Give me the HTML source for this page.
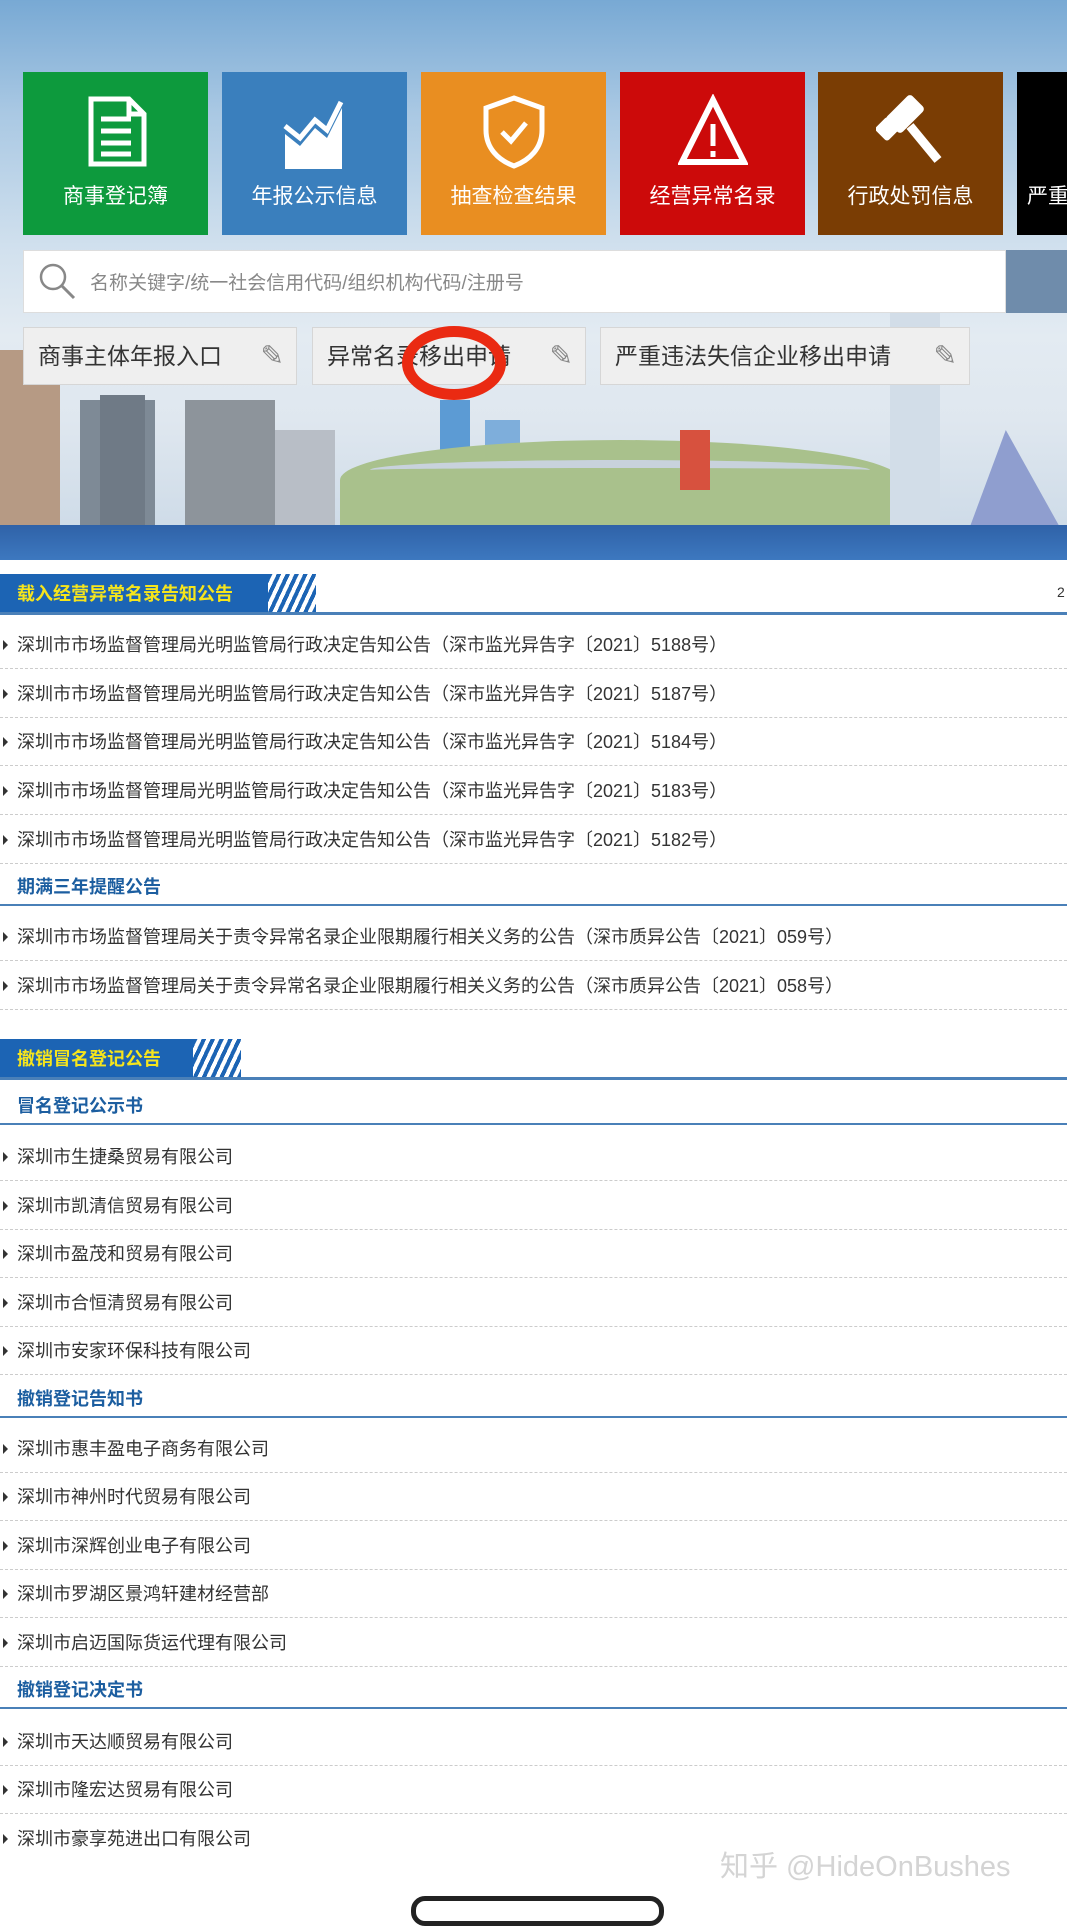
<!DOCTYPE html>
<html><head><meta charset="utf-8"><style>
*{margin:0;padding:0;box-sizing:border-box}
body{width:1067px;height:1906px;overflow:hidden;background:#fff;font-family:"Liberation Sans","Noto Sans CJK SC",sans-serif;position:relative}
.a{position:absolute}
.hero{left:0;top:0;width:1067px;height:560px;background:linear-gradient(180deg,#78a9d4 0%,#a9c8e3 20%,#d2e1ee 45%,#e3ebf2 60%,#dfe7ef 75%,#c9d8e6 100%);overflow:hidden}
.tile{top:72px;width:185px;height:163px;color:#fff;font-size:21px;text-align:center}
.tile span{position:absolute;left:0;right:0;top:108px}
.tile svg{position:absolute;left:58px;top:22px}
.btn{top:327px;height:58px;background:#efefef;border:1px solid #d6d6d6;font-size:23px;color:#333;line-height:56px;padding-left:14px}
.btn i{position:absolute;right:12px;top:10px;font-style:normal;color:#888;font-size:28px;line-height:36px}
.row{left:0;width:1067px;height:48px;font-size:18px;color:#333;line-height:48px;padding-left:17px;border-bottom:1px dashed #ccc}
.row:before{content:"";position:absolute;left:3px;top:19px;border-left:5px solid #333;border-top:5px solid transparent;border-bottom:5px solid transparent}
.sub{left:0;width:1067px;font-size:18px;font-weight:bold;color:#1c5ea0;padding-left:17px;border-bottom:2px solid #4a80b8;height:34px;line-height:30px}
.hd{left:0;height:40px;background:#1c64b4;color:#f6e51c;font-weight:bold;font-size:18px;line-height:40px;padding-left:17px}
.hdline{left:0;width:1067px;height:3px;background:#4a80b8}
</style></head><body>
<div class="a hero">
 <div class="a" style="left:0;top:350px;width:60px;height:190px;background:#b69a84"></div>
 <div class="a" style="left:80px;top:400px;width:75px;height:140px;background:#7e8a96"></div>
 <div class="a" style="left:100px;top:395px;width:45px;height:145px;background:#6f7a86"></div>
 <div class="a" style="left:185px;top:400px;width:90px;height:140px;background:#8d949b"></div>
 <div class="a" style="left:275px;top:430px;width:60px;height:110px;background:#b8bec6"></div>
 <div class="a" style="left:440px;top:400px;width:30px;height:100px;background:#5c9bd4"></div>
 <div class="a" style="left:485px;top:420px;width:35px;height:80px;background:#7eaedb"></div>
 <div class="a" style="left:340px;top:440px;width:560px;height:100px;background:#a9c18c;border-radius:50% 50% 0 0/40% 40% 0 0"></div>
 <div class="a" style="left:370px;top:460px;width:500px;height:20px;border-top:8px solid #c8d2dc;border-radius:50%"></div>
 <div class="a" style="left:680px;top:430px;width:30px;height:60px;background:#d7513e"></div>
 <div class="a" style="left:890px;top:300px;width:50px;height:240px;background:#d2dde8"></div>
 <div class="a" style="left:965px;top:430px;width:102px;height:110px;background:#8f9ecf;clip-path:polygon(40% 0,100% 100%,0 100%)"></div>
 <div class="a" style="left:0;top:525px;width:1067px;height:35px;background:linear-gradient(180deg,#2f62a8,#3d78bf)"></div>
 <div class="a tile" style="left:23px;background:#0d9a3d"><svg width="70" height="75" viewBox="0 0 70 75"><path d="M10 5h38l15 15v50H10z M48 5v15h15" fill="none" stroke="#fff" stroke-width="5"/><path d="M20 25h30M20 37h30M20 49h30M20 60h30" stroke="#fff" stroke-width="5"/></svg><span>商事登记簿</span></div>
 <div class="a tile" style="left:222px;background:#3a7fbd"><svg width="70" height="75" viewBox="0 0 70 75"><path d="M5 60V40l15 12 15-18 12 10 15-30v66H5z" fill="#fff"/><path d="M5 32l15 12 15-18 12 10 14-28" fill="none" stroke="#fff" stroke-width="5"/></svg><span>年报公示信息</span></div>
 <div class="a tile" style="left:421px;background:#e98e21"><svg width="70" height="75" viewBox="0 0 70 75"><path d="M35 4l28 10v22c0 18-12 30-28 36C19 66 7 54 7 36V14z" fill="none" stroke="#fff" stroke-width="5"/><path d="M23 38l9 9 15-18" fill="none" stroke="#fff" stroke-width="5"/></svg><span>抽查检查结果</span></div>
 <div class="a tile" style="left:620px;background:#cc0a0a"><svg width="70" height="75" viewBox="0 0 70 75"><path d="M35 6L66 68H4z" fill="none" stroke="#fff" stroke-width="6"/><path d="M35 30v22M35 57v6" stroke="#fff" stroke-width="5"/></svg><span>经营异常名录</span></div>
 <div class="a tile" style="left:818px;background:#7a3d04"><svg width="70" height="75" viewBox="0 0 70 75"><rect x="18" y="2" width="22" height="36" rx="4" transform="rotate(45 29 20)" fill="#fff"/><path d="M34 32l28 34" stroke="#fff" stroke-width="9"/><rect x="2" y="26" width="18" height="18" rx="3" transform="rotate(45 11 35)" fill="#fff"/></svg><span>行政处罚信息</span></div>
 <div class="a tile" style="left:1017px;width:60px;background:#000"><span style="text-align:left;padding-left:10px">严重</span></div>
 <div class="a" style="left:23px;top:250px;width:983px;height:63px;background:#fff;border:1px solid #ddd"></div>
 <div class="a" style="left:1006px;top:250px;width:61px;height:63px;background:#6f8cab"></div>
 <svg class="a" style="left:36px;top:260px" width="44" height="44" viewBox="0 0 44 44"><circle cx="17" cy="17" r="12" fill="none" stroke="#888" stroke-width="2.5"/><path d="M26 26l12 12" stroke="#888" stroke-width="3"/></svg>
 <div class="a" style="left:90px;top:268px;font-size:19px;color:#888">名称关键字/统一社会信用代码/组织机构代码/注册号</div>
 <div class="a btn" style="left:23px;width:274px">商事主体年报入口<i>✎</i></div>
 <div class="a btn" style="left:312px;width:274px">异常名录移出申请<i>✎</i></div>
 <div class="a btn" style="left:600px;width:370px">严重违法失信企业移出申请<i>✎</i></div>
 <div class="a" style="left:402px;top:326px;width:104px;height:74px;border:11px solid #ea2a12;border-radius:50%"></div>
</div>
<div class="a hd" style="top:574px;width:290px">载入经营异常名录告知公告</div>
<div class="a" style="left:268px;top:574px;width:48px;height:40px;background:repeating-linear-gradient(115deg,#1c64b4 0 4px,#fff 4px 8px)"></div>
<div class="a hdline" style="top:612px"></div>
<div class="a" style="left:1057px;top:584px;font-size:14px;color:#333">2</div>
<div class="a row" style="top:621px">深圳市市场监督管理局光明监管局行政决定告知公告（深市监光异告字〔2021〕5188号）</div>
<div class="a row" style="top:670px">深圳市市场监督管理局光明监管局行政决定告知公告（深市监光异告字〔2021〕5187号）</div>
<div class="a row" style="top:718px">深圳市市场监督管理局光明监管局行政决定告知公告（深市监光异告字〔2021〕5184号）</div>
<div class="a row" style="top:767px">深圳市市场监督管理局光明监管局行政决定告知公告（深市监光异告字〔2021〕5183号）</div>
<div class="a row" style="top:816px">深圳市市场监督管理局光明监管局行政决定告知公告（深市监光异告字〔2021〕5182号）</div>
<div class="a sub" style="top:872px">期满三年提醒公告</div>
<div class="a row" style="top:913px">深圳市市场监督管理局关于责令异常名录企业限期履行相关义务的公告（深市质异公告〔2021〕059号）</div>
<div class="a row" style="top:962px">深圳市市场监督管理局关于责令异常名录企业限期履行相关义务的公告（深市质异公告〔2021〕058号）</div>
<div class="a hd" style="top:1039px;width:215px">撤销冒名登记公告</div>
<div class="a" style="left:193px;top:1039px;width:48px;height:40px;background:repeating-linear-gradient(115deg,#1c64b4 0 4px,#fff 4px 8px)"></div>
<div class="a hdline" style="top:1077px"></div>
<div class="a sub" style="top:1091px">冒名登记公示书</div>
<div class="a row" style="top:1133px">深圳市生捷桑贸易有限公司</div>
<div class="a row" style="top:1182px">深圳市凯清信贸易有限公司</div>
<div class="a row" style="top:1230px">深圳市盈茂和贸易有限公司</div>
<div class="a row" style="top:1279px">深圳市合恒清贸易有限公司</div>
<div class="a row" style="top:1327px">深圳市安家环保科技有限公司</div>
<div class="a sub" style="top:1384px">撤销登记告知书</div>
<div class="a row" style="top:1425px">深圳市惠丰盈电子商务有限公司</div>
<div class="a row" style="top:1473px">深圳市神州时代贸易有限公司</div>
<div class="a row" style="top:1522px">深圳市深辉创业电子有限公司</div>
<div class="a row" style="top:1570px">深圳市罗湖区景鸿轩建材经营部</div>
<div class="a row" style="top:1619px">深圳市启迈国际货运代理有限公司</div>
<div class="a sub" style="top:1675px">撤销登记决定书</div>
<div class="a row" style="top:1718px">深圳市天达顺贸易有限公司</div>
<div class="a row" style="top:1766px">深圳市隆宏达贸易有限公司</div>
<div class="a row" style="top:1815px;border-bottom:none">深圳市豪享苑进出口有限公司</div>
<div class="a" style="left:720px;top:1843px;font-size:29px;color:#d4d4d4">知乎 @HideOnBushes</div>
<div class="a" style="left:411px;top:1896px;width:253px;height:30px;border:5px solid #222;border-radius:14px;background:#fff"></div>
</body></html>
